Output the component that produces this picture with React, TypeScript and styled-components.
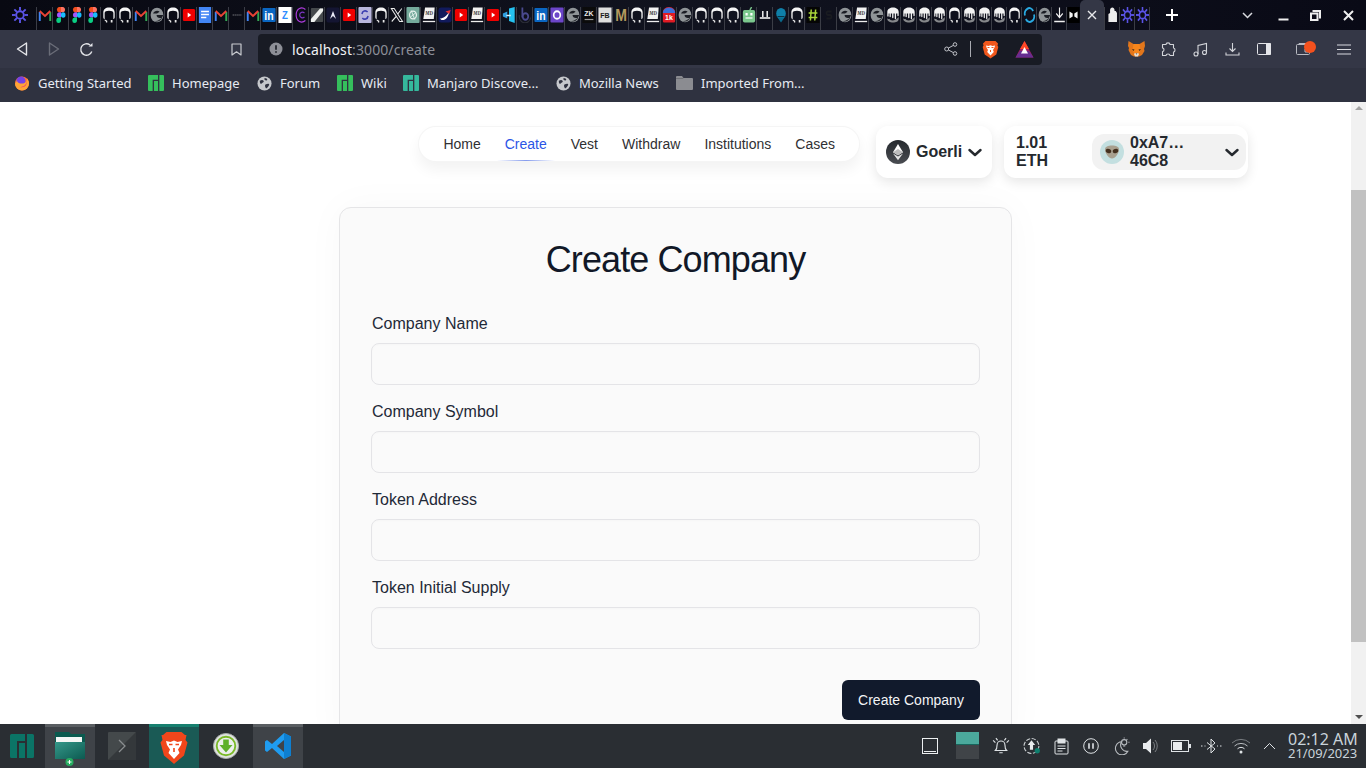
import React from "react";
import styled, { createGlobalStyle } from "styled-components";

const Global = createGlobalStyle`
  html, body { margin: 0; padding: 0; height: 100%; overflow: hidden; background: #fff; }
  * { box-sizing: border-box; }
`;

const Shell = styled.div`
  width: 100vw; height: 100vh; display: flex; flex-direction: column; overflow: hidden;
  font-family: "Liberation Sans", Arial, sans-serif;
`;

/* ---------- Tab strip ---------- */
const TabStrip = styled.div`
  height: 30px; flex: none; display: flex; align-items: stretch;
  background: linear-gradient(90deg, #080912 0%, #11131f 50%, #090a16 100%);
`;
const LeadSlot = styled.div`
  width: 36px; display: flex; align-items: center; justify-content: flex-end; padding: 0 8px 0 0;
`;
const TabSlot = styled.div<{ $w: number }>`
  width: ${p => p.$w}px; flex: none; margin-top: 7px; display: flex; align-items: flex-start; justify-content: center;
  border-left: 1px solid #3b3d46;
  svg { display: block; flex: none; }
`;
const ActiveTab = styled.div`
  width: 24px; flex: none; background: #343746; border-radius: 5px 5px 0 0; display: flex; align-items: center; justify-content: center;
`;
const StripEnd = styled.div`
  flex: 1; display: flex; align-items: flex-start; border-left: 1px solid #3b3d46; height: 23px; margin-top: 7px;
`;
const StripControls = styled.div`
  margin-left: auto; display: flex; align-items: center; height: 16px;
`;
const StripButton = styled.div<{ $w: number }>`
  width: ${p => p.$w}px; display: flex; align-items: center; justify-content: center;
`;
const NewTab = styled.div`
  margin-left: 12px; width: 20px; height: 16px; display: flex; align-items: center; justify-content: center;
`;

/* ---------- Toolbar ---------- */
const Toolbar = styled.div`
  height: 38px; flex: none; background: #343746; display: flex; align-items: center; padding: 0 6px; font-family: "Noto Sans", sans-serif;
`;
const ToolSlot = styled.div<{ $w?: number }>`
  width: ${p => p.$w ?? 32}px; height: 32px; flex: none; display: flex; align-items: center; justify-content: center; position: relative;
`;
const Gap = styled.div<{ $w: number }>` width: ${p => p.$w}px; flex: none; `;
const UrlBar = styled.div`
  width: 784px; height: 31px; flex: none; background: #181b24; border-radius: 4px; display: flex; align-items: center; padding: 0 8px 0 11px; font-size: 14px; color: #f0f2f5;
`;
const UrlText = styled.div` margin-left: 9px; flex: 1; letter-spacing: 0.1px; span { color: #8c8f98; } `;
const Divider = styled.div` width: 1px; height: 16px; background: #a9abb2; margin: 0 11px 0 12px; `;
const Badge = styled.span`
  position: absolute; width: 12px; height: 12px; border-radius: 50%; background: #f4511e; top: 8px; left: 17px;
`;

/* ---------- Bookmarks ---------- */
const BookmarkBar = styled.div`
  height: 34px; flex: none; background: #2f3240; display: flex; align-items: center; padding-left: 14px; padding-bottom: 4px; font-family: "Noto Sans", sans-serif; font-size: 13px; color: #e6eaf2;
`;
const Bookmark = styled.div<{ $w: number }>`
  width: ${p => p.$w}px; flex: none; display: flex; align-items: center; gap: 8px; white-space: nowrap;
`;

/* ---------- Page ---------- */
const Viewport = styled.div` flex: 1; min-height: 0; display: flex; `;
const Page = styled.div` flex: 1; min-width: 0; overflow: hidden; background: #fff; padding-top: 24px; `;
const Header = styled.header` display: flex; justify-content: flex-end; align-items: flex-start; padding-right: 103px; `;
const NavPill = styled.nav`
  height: 36px; display: flex; align-items: center; gap: 24px; padding: 0 24px; margin-right: 16px; border-radius: 18px;
  background: #fff; border: 1px solid rgba(0,0,0,.04); box-shadow: 0 8px 14px rgba(0,0,0,.05); font-size: 14px; color: #27272a;
`;
const NavLink = styled.a<{ $active?: boolean }>`
  position: relative; color: ${p => (p.$active ? "#2b55e6" : "#303033")};
`;
const NavGlow = styled.span`
  position: absolute; left: -8px; right: -8px; top: 24px; height: 1px;
  background: linear-gradient(90deg, rgba(120,145,235,0), rgba(120,145,235,.9), rgba(120,145,235,0));
`;
const WalletCard = styled.div`
  height: 52px; background: #fff; border-radius: 12px; box-shadow: 0 4px 12px rgba(0,0,0,.1); display: flex; align-items: center;
  font-size: 16px; font-weight: 700; color: #25292e;
`;
const NetworkCard = styled(WalletCard)` width: 116px; padding: 0 9px 0 10px; gap: 6px; margin-right: 12px; `;
const AccountCard = styled(WalletCard)` width: 244px; padding: 0 2px 0 12px; justify-content: space-between; line-height: 18px; `;
const Balance = styled.div` width: 50px; `;
const AccountPill = styled.div`
  width: 154px; height: 36px; background: #f2f2f2; border-radius: 12px; display: flex; align-items: center; padding: 0 7px 0 8px;
`;
const AccountName = styled.div` width: 64px; margin-left: 6px; flex: none; `;
const PillChevron = styled.div` margin-left: auto; display: flex; `;

const Card = styled.main`
  width: 673px; margin: 29px 0 0 339px; padding: 31px; background: #fafafa; border: 1px solid #e5e5e7; border-radius: 12px;
  box-shadow: 0 0 40px rgba(0,0,0,.03);
`;
const Title = styled.h1`
  margin: 0 0 31px; padding-top: 1px; font-size: 36px; line-height: 40px; font-weight: 400; text-align: center; color: #111827; letter-spacing: -0.9px;
`;
const Field = styled.div` margin-bottom: 14px; `;
const Label = styled.label` display: block; font-size: 16px; line-height: 24px; padding: 1px 0 0 1px; color: #1f2937; margin-bottom: 7px; height: 25px; `;
const Input = styled.input`
  display: block; width: 100%; height: 42px; background: #fafafa; border: 1px solid #e4e4e7; border-radius: 8px; outline: none;
  box-shadow: inset 0 1px 2px rgba(0,0,0,.02);
`;
const Actions = styled.div` display: flex; justify-content: flex-end; margin-top: 31px; `;
const Submit = styled.button`
  width: 138px; height: 40px; background: #111a2c; color: #f3f4f6; border: 0; border-radius: 6px; font: 14px "Liberation Sans", Arial, sans-serif;
`;

const ScrollTrack = styled.div`
  width: 15px; flex: none; background: #f1f1f1; display: flex; flex-direction: column; align-items: center; position: relative; padding-top: 88px;
`;
const ScrollThumb = styled.div` width: 100%; height: 452px; background: #c1c1c1; `;
const ScrollArrow = styled.div<{ $up?: boolean }>`
  position: absolute; ${p => (p.$up ? "top: 4px;" : "bottom: 5px;")}
  border-left: 4px solid transparent; border-right: 4px solid transparent;
  ${p => (p.$up ? "border-bottom: 4px solid #a3a3a3;" : "border-top: 4px solid #505050;")}
`;

/* ---------- Taskbar ---------- */
const Taskbar = styled.div`
  height: 44px; flex: none; background: #2a2e33; display: flex; align-items: stretch; font-family: "Noto Sans", sans-serif;
`;
const Launcher = styled.div` width: 45px; display: flex; align-items: center; padding-left: 10px; `;
const TaskButton = styled.div<{ $w?: number; $state?: "open" | "active" | "idle"; $mr?: number }>`
  width: ${p => p.$w ?? 50}px; flex: none; margin-right: ${p => p.$mr ?? 0}px; display: flex; align-items: flex-start; justify-content: center;
  background: ${p => (p.$state === "active" ? "#1a5a55" : p.$state === "open" ? "#3f4348" : "transparent")};
  border-top: 3px solid ${p => (p.$state === "active" ? "#17806f" : p.$state === "open" ? "#5a5e62" : "transparent")};
  padding-top: 5px;
`;
const Tray = styled.div` margin-left: auto; display: flex; align-items: center; `;
const TraySlot = styled.div<{ $w: number }>` width: ${p => p.$w}px; flex: none; display: flex; align-items: center; justify-content: center; `;
const Pager = styled.div` width: 23px; height: 27px; margin-bottom: 1px; display: flex; flex-direction: column; `;
const PagerTop = styled.div` height: 13px; background: #4ba99c; border-bottom: 1px solid #17655c; `;
const PagerBottom = styled.div` flex: 1; background: #404448; `;
const Clock = styled.div`
  width: 84px; padding-left: 6px; color: #c9d3da; text-align: left; white-space: nowrap;
`;
const ClockTime = styled.div` font-size: 16px; line-height: 15px; `;
const ClockDate = styled.div` font-size: 13px; line-height: 13px; `;

/* ---------- Icons ---------- */
const tileText = (t: string, fill: string, size = 6, y = 10, weight = 700) => (
  <text x="8" y={y} textAnchor="middle" fontSize={size} fontWeight={weight} fontFamily="Liberation Sans, sans-serif" fill={fill}>{t}</text>
);

const icons: Record<string, React.ReactNode> = {
  spark: (
    <g stroke="#5b54e8" strokeWidth="1.9">
      <circle cx="8" cy="8" r="3.8" />
      {[0, 45, 90, 135, 180, 225, 270, 315].map(a => (
        <line key={a} x1="8" y1="3.600" x2="8" y2="0" transform={`rotate(${a} 8 8)`} />
      ))}
    </g>
  ),
  gmail: (
    <g strokeWidth="2.200" strokeLinejoin="round">
      <path d="M2 14V5" stroke="#4285f4" />
      <path d="M14 14V5" stroke="#34a853" />
      <path d="M2 4l6 5 6-5" stroke="#ea4335" />
    </g>
  ),
  figma: (
    <g>
      <path d="M8 0H5.500a2.700 2.700 0 000 5.300H8z" fill="#f24e1e" />
      <path d="M8 0h2.500a2.700 2.700 0 010 5.300H8z" fill="#ff7262" />
      <path d="M8 5.300H5.500a2.700 2.700 0 000 5.300H8z" fill="#a259ff" />
      <circle cx="10.500" cy="8" r="2.650" fill="#1abcfe" />
      <path d="M8 10.600H5.500A2.700 2.700 0 108 13.300z" fill="#0acf83" />
    </g>
  ),
  github: (
    <g>
      <path d="M1.500 10V5.500C1.500 2.500 4 .5 8 .5s6.500 2 6.500 5V10c0 1.500-.8 2-1.500 2V6c0-1.500-2-2.300-5-2.300S3 4.500 3 6v6c-.8 0-1.500-.5-1.500-2z" fill="#f5f5f5" />
      <path d="M3 12.500c1 .3 2 .5 3 1.200v1.800H4.500v-1L3 13.500z" fill="#e8e8e8" />
      <path d="M10 13h2v2.500h-2z" fill="#e8e8e8" />
    </g>
  ),
  edge: (
    <g>
      <circle cx="8" cy="8" r="7.300" fill="#8f9497" />
      <path d="M3.500 6.500C5 3.500 9 3 11 4.800L8 6.500zM15 8H7.500c0 2.500 3 3.800 6.500 2.500-1 3-5 5-8.500 3.500 4 0 8-2 9.500-6z" fill="#1b1d24" />
    </g>
  ),
  yt: (
    <g>
      <rect x="1" y="2" width="14" height="12" rx="1.500" fill="#ef0000" />
      <path d="M6.500 5.500l4 2.500-4 2.500z" fill="#fff" />
    </g>
  ),
  docs: (
    <g>
      <rect x="1" y="0" width="14" height="16" fill="#4285f4" />
      <path d="M3.500 4.500h9M3.500 7.500h9M3.500 10.500h6" stroke="#fff" strokeWidth="1.300" />
    </g>
  ),
  dash: <path d="M3 8h10" stroke="#55575e" strokeWidth="1.500" strokeDasharray="1.500 .7" />,
  linkedin: (
    <g>
      <rect x="0.500" y="1" width="15" height="14" rx="1" fill="#0a66c2" />
      {tileText("in", "#fff", 12, 13)}
    </g>
  ),
  z: (
    <g>
      <rect x="0.500" y="0" width="15" height="16" fill="#fff" />
      {tileText("Z", "#2d8cff", 11, 12)}
    </g>
  ),
  c: (
    <g stroke="#b13de0" strokeWidth="1.300">
      <path d="M13 2.500C9 -.5 2.500 1 2.500 8s6.500 8.500 10.500 5.500" />
      <path d="M12 6C10 4.500 6.500 5 6.500 8s3.500 3.500 5.500 2" stroke="#7f35c9" />
    </g>
  ),
  pen: (
    <g>
      <rect x="1" y="1" width="14" height="14" rx="1" fill="#45494c" />
      <path d="M1 15v-3L11.500 1.500H15v2.500L5 15z" fill="#eef0ee" />
    </g>
  ),
  a: (
    <g>
      <rect x="0.500" y="0.500" width="15" height="15" rx="2" fill="#141532" />
      <path d="M4.500 12L8 4l3.500 8-3.500-3z" fill="#e9e9f5" />
    </g>
  ),
  sync: (
    <g>
      <rect x="0.500" y="0" width="15" height="16" rx="1" fill="#b9b7de" />
      <path d="M11 5A3.800 3.800 0 004.500 7M5 11a3.800 3.800 0 006.500-2" stroke="#3b3fb0" strokeWidth="1.800" />
    </g>
  ),
  x: <path d="M1.500 1.500h3.300l9.500 13H11zM13.500 1.500L9 6.800M7 9.500l-5 5" stroke="#efefef" strokeWidth="1.100" />,
  gpt: (
    <g>
      <rect x="0.500" y="0" width="15" height="16" rx="1" fill="#74aa9c" />
      <circle cx="8" cy="8" r="3.900" stroke="#e8f3ef" strokeWidth="1.400" />
      <path d="M6 3.500l4 9M11.500 5.500l-7 5" stroke="#e8f3ef" strokeWidth=".9" />
    </g>
  ),
  md: (
    <g>
      <path d="M3.500 0.500H14.500L13.500 12H1.500z" fill="#f2f2f2" />
      <path d="M1 14.500h14" stroke="#eee" strokeWidth="1.300" />
      <text x="8" y="8" textAnchor="middle" fontSize="5.500" fontStyle="italic" fontWeight="700" fontFamily="Liberation Serif, serif" fill="#333">MD</text>
    </g>
  ),
  navy: (
    <g>
      <rect x="0.500" y="0.500" width="15" height="15" rx="3" fill="#111a5c" />
      <path d="M2 11.500c4 0 8-2 11-7.500-1 6-4 9.500-9 9z" fill="#fff" />
      <path d="M8.500 4.500l6-1.500-1.500 4z" fill="#e23030" />
    </g>
  ),
  azure: (
    <g>
      <path d="M1 6.500L6 4.500v7l-5-2z" fill="#2f9fe0" />
      <path d="M8 1.500l6.500-1.500v16L8 14z" fill="#25c2f0" />
      <path d="M5 8.500h5" stroke="#d9f3ff" strokeWidth="1.500" />
    </g>
  ),
  boot: (
    <g>
      <path d="M5 0.500v10" stroke="#4a4a8e" strokeWidth="2" />
      <circle cx="8.500" cy="9.500" r="3.200" stroke="#4a4a8e" strokeWidth="2" />
      <path d="M1.500 8a6.500 6.500 0 0013 2.500" stroke="#2c2e38" strokeWidth="1.200" />
    </g>
  ),
  gear: (
    <g>
      <rect x="0.500" y="0.500" width="15" height="15" rx="1" fill="#6c45c9" />
      <circle cx="8" cy="8" r="3.800" stroke="#fff" strokeWidth="1.900" />
    </g>
  ),
  zk: (
    <g>
      <rect x="0.500" y="0" width="15" height="16" fill="#0b0b0b" />
      {tileText("ZK", "#e9e9e9", 8, 9)}
      <path d="M3 12.500h10" stroke="#999" strokeWidth="1.200" />
    </g>
  ),
  fb: (
    <g>
      <rect x="0.500" y="0.500" width="15" height="15" fill="#dedede" />
      {tileText("FB", "#1a1a1a", 8, 11)}
    </g>
  ),
  gold: tileText("M", "#b49a5e", 16, 14),
  red: (
    <g>
      <path d="M1 5a7 5 0 0114 0v9a1.500 1.500 0 01-1.500 1.500h-11A1.500 1.500 0 011 14z" fill="#e01b24" />
      <path d="M1 6a7 5.500 0 0114 0z" fill="#3d6fd8" />
      {tileText("1k", "#fff", 8, 13.500)}
    </g>
  ),
  robot: (
    <g>
      <rect x="1" y="3" width="14" height="12.500" rx="2" fill="#7bc88d" />
      <path d="M9 3l2-3" stroke="#7bc88d" strokeWidth="1.500" />
      <rect x="4" y="6" width="2.500" height="2.500" fill="#fff" />
      <rect x="9.500" y="6" width="2.500" height="2.500" fill="#fff" />
      <path d="M4 11h8" stroke="#fff" strokeWidth="1.200" />
    </g>
  ),
  u: <path d="M5.500 4v6M10.500 4v6M2 11h12" stroke="#fff" strokeWidth="1.600" />,
  balloon: (
    <g>
      <circle cx="8" cy="6.500" r="5.500" fill="#0f7fa8" />
      <path d="M4 10.500L8 15.500l4-5z" fill="#0a6a8c" />
      <path d="M4 9.500h8" stroke="#0a2d3c" />
    </g>
  ),
  hash: (
    <g>
      <rect x="0.500" y="0" width="15" height="16" fill="#050505" />
      <path d="M6 2.500l-1 11M11 2.500l-1 11M3 6h10M3 10.500h10" stroke="#a8d53a" strokeWidth="1.700" />
    </g>
  ),
  s: <path d="M11 4.500H6.500a1.800 1.800 0 000 3.500h3a1.800 1.800 0 010 3.500H5" stroke="#191b20" strokeWidth="2" />,
  drip: (
    <g>
      <path d="M1.500 5C1.500 2 4.500 .5 8 .5s6.500 1.500 6.500 4.500v3.500c0 1-1.500 1-1.500 0V6.500h-1.500v5c0 1-1.500 1-1.500 0v-5H8.500v4c0 1-1.500 1-1.500 0v-4H5.500v3c0 1-1.500 1-1.500 0v-3H3V9c0 1-1.500 1-1.500 0z" fill="#f2f2f2" />
      <path d="M1.500 10.500c0 1 .5 1.500 1.500 1.500s2 .5 2 1c3 1 6.500 0 9.500-3V12c0 2.500-3 3.500-6.500 3.500S1.500 14 1.500 12z" fill="#85878a" />
    </g>
  ),
  blue: (
    <g stroke="#29a9e1" strokeWidth="2.200">
      <path d="M2.500 8.500A5.500 5.500 0 0112.500 4" />
      <path d="M13.500 7.500A5.500 5.500 0 013.500 12" />
    </g>
  ),
  dl: <path d="M8 0.500v10M4 6.500l4 4 4-4M1.500 14.500h13" stroke="#f0f0f0" strokeWidth="1.400" />,
  bow: (
    <g>
      <rect x="0.500" y="0" width="15" height="16" fill="#000" />
      <path d="M3 4.500l4 2v3l-4 2zM13 4.500v7l-4-2v-3z" fill="#f2f2f2" />
    </g>
  ),
  puzzle: <path d="M3 15V7l2-1V3c0-3.500 5.500-3.500 5.500 0v1H12l1.500 2v9z" fill="#ececec" />,
};

const stripA = "gmail figma figma figma github github gmail edge github yt docs gmail dash gmail linkedin z c pen a yt sync github x gpt md navy yt md yt azure boot linkedin gear edge zk fb gold github md red edge github github github robot u balloon github hash s edge md edge drip drip".split(" ");
const stripB = "drip drip github drip drip drip github blue edge dl bow".split(" ");
const stripC = ["puzzle", "spark", "spark"];

const Fav = ({ k, w = 14 }: { k: string; w?: number }) => (
  <svg width={w} height={16} viewBox="0 0 16 16" preserveAspectRatio="none" fill="none">{icons[k]}</svg>
);

const ManjaroLogo = ({ size, color }: { size: number; color: string }) => (
  <svg width={size} height={size} viewBox="0 0 24 24">
    <path d="M0 1.500A1.500 1.500 0 011.500 0H15v7H7v17H1.500A1.500 1.500 0 010 22.500zM9 9h6v15H9zM17 0h5.500A1.500 1.500 0 0124 1.500v21a1.500 1.500 0 01-1.500 1.500H17z" fill={color} />
  </svg>
);

const Globe = () => (
  <svg width="15" height="15" viewBox="0 0 16 16">
    <circle cx="8" cy="8" r="7.500" fill="#c6c8cc" />
    <path d="M3 5c2-1 3-1 4 0s-1 2-2 3-2 0-2-3zM9 9c2-1 4-1 4 0s-2 4-3 4-2-3-1-4zM8 2c2 0 3 1 3 2s-2 1-3 0z" fill="#2f3240" />
  </svg>
);

const Chevron = ({ w = 14 }: { w?: number }) => (
  <svg width={w} height="9" viewBox="0 0 14 9" fill="none">
    <path d="M1.500 2L7 7l5.500-5" stroke="#25292e" strokeWidth="2.400" strokeLinecap="round" strokeLinejoin="round" />
  </svg>
);

const stroke = "#d3d5da";

export default function App() {
  return (
    <Shell>
      <Global />
      <TabStrip>
        <LeadSlot><Fav k="spark" w={16} /></LeadSlot>
        {stripA.map((k, i) => <TabSlot key={i} $w={16}><Fav k={k} /></TabSlot>)}
        {stripB.map((k, i) => <TabSlot key={i} $w={i === 10 ? 14 : 15}><Fav k={k} w={13} /></TabSlot>)}
        <ActiveTab>
          <svg width="10" height="10" viewBox="0 0 10 10"><path d="M1 1l8 8M9 1l-8 8" stroke="#e8e9ec" strokeWidth="1.400" /></svg>
        </ActiveTab>
        {stripC.map((k, i) => <TabSlot key={i} $w={15}><Fav k={k} w={13} /></TabSlot>)}
        <StripEnd>
          <NewTab>
            <svg width="12" height="12" viewBox="0 0 12 12"><path d="M6 0v12M0 6h12" stroke="#fff" strokeWidth="2" /></svg>
          </NewTab>
          <StripControls>
            <StripButton $w={38}>
              <svg width="11" height="7" viewBox="0 0 11 7" fill="none"><path d="M1 1l4.500 4.500L10 1" stroke="#d8dadf" strokeWidth="1.500" /></svg>
            </StripButton>
            <StripButton $w={34}>
              <svg width="11" height="11" viewBox="0 0 11 11"><path d="M0.500 9.500h10" stroke="#eee" strokeWidth="2" /></svg>
            </StripButton>
            <StripButton $w={30}>
              <svg width="11" height="11" viewBox="0 0 11 11" fill="none"><rect x="1" y="3.500" width="6.500" height="6.500" stroke="#eee" strokeWidth="2" /><path d="M3.500 2V1H10v6.500H9" stroke="#eee" strokeWidth="2" /></svg>
            </StripButton>
            <StripButton $w={36}>
              <svg width="11" height="11" viewBox="0 0 11 11"><path d="M1 1l9 9M10 1l-9 9" stroke="#eee" strokeWidth="2" /></svg>
            </StripButton>
          </StripControls>
        </StripEnd>
      </TabStrip>

      <Toolbar>
        <ToolSlot>
          <svg width="12" height="14" viewBox="0 0 12 14" fill="none"><path d="M10.500 1L1.500 7l9 6z" stroke="#e4e5e9" strokeWidth="1.400" strokeLinejoin="round" /></svg>
        </ToolSlot>
        <ToolSlot>
          <svg width="12" height="14" viewBox="0 0 12 14" fill="none"><path d="M1.500 1l9 6-9 6z" stroke="#6a6d78" strokeWidth="1.400" strokeLinejoin="round" /></svg>
        </ToolSlot>
        <ToolSlot>
          <svg width="15" height="15" viewBox="0 0 15 15" fill="none"><path d="M12.800 9.500A5.700 5.700 0 1111 3" stroke="#e4e5e9" strokeWidth="1.400" /><path d="M9.500 4.500h4v-3.500z" fill="#e4e5e9" /></svg>
        </ToolSlot>
        <Gap $w={118} />
        <ToolSlot $w={32}>
          <svg width="11" height="13" viewBox="0 0 11 13" fill="none"><path d="M1 1h9v11L5.500 8.800 1 12z" stroke="#c9cbd0" strokeWidth="1.200" strokeLinejoin="round" /></svg>
        </ToolSlot>
        <Gap $w={6} />
        <UrlBar>
          <svg width="14" height="14" viewBox="0 0 14 14"><circle cx="7" cy="7" r="6.500" fill="#8d8f97" /><path d="M7 3.200v4.500M7 9.300v1.500" stroke="#181b24" strokeWidth="1.600" /></svg>
          <UrlText>localhost<span>:3000/create</span></UrlText>
          <svg width="14" height="14" viewBox="0 0 14 14" fill="none" stroke="#bfc1c7" strokeWidth="1"><circle cx="2.700" cy="7" r="2" /><circle cx="11" cy="2.500" r="1.800" /><circle cx="11" cy="11.500" r="1.800" /><path d="M4.500 6l5-2.700M4.500 8l5 2.700" /></svg>
          <Divider />
          <svg width="17" height="19" viewBox="0 0 17 19">
            <path d="M3.500 1h10L16 3.500l-.5 2 .8 1.500-2 7.500L9.500 17.800 8.500 18.500l-1-.7-4.800-3.300L.7 7l.8-1.500-.5-2z" fill="#f1581d" />
            <path d="M4 5.500l2.500.5 2-.7 2 .7L13 5.500l-.5 2-1.500 2.500.8 2L8.500 15.500 5.200 12l.8-2L4.500 7.500z" fill="#fff" />
            <path d="M5.500 7.500h2M9.500 7.500h2M8.500 10v2" stroke="#f1581d" strokeWidth="1" />
          </svg>
          <Gap $w={16} />
          <svg width="19" height="17" viewBox="0 0 19 17">
            <path d="M9.500 0L18.500 16.500H.5z" fill="#9e1f63" />
            <path d="M9.500 0L14 8H5z" fill="#ff4724" />
            <path d="M.5 16.500L5 10h9l4.500 6.500z" fill="#662d91" />
            <path d="M9.500 6L13 12.500H6z" fill="#fff" />
          </svg>
        </UrlBar>
        <Gap $w={78} />
        <ToolSlot>
          <svg width="17" height="16" viewBox="0 0 17 16">
            <path d="M0.500 0l5 3h6l5-3 .5 5-1 3 .5 2-2.500 4-3 1.500h-5L3 14 .5 9l.5-2-1-2z" fill="#e2761b" />
            <path d="M5.500 3h6L12.500 9l-2 4h-4l-2-4z" fill="#f6851b" />
            <path d="M4 8l2.500.5L5.500 10zM13 8l-2.500.5 1 1.500z" fill="#3a2a1c" />
            <path d="M6 13l1-1h3l1 1-1 2.500H7z" fill="#e8ddcf" />
            <path d="M7.500 12.500h2l-1 1z" fill="#2a1c10" />
          </svg>
        </ToolSlot>
        <ToolSlot>
          <svg width="15" height="15" viewBox="0 0 15 15" fill="none"><path d="M5 2.500c0-2.200 4-2.200 4 0h3.500v3.500c2 0 2 4 0 4V13.500H9c0-2-4-2-4 0H1.500v-4c2 0 2-3.500 0-3.500V2.500z" stroke={stroke} strokeWidth="1.100" strokeLinejoin="round" /></svg>
        </ToolSlot>
        <ToolSlot>
          <svg width="15" height="15" viewBox="0 0 15 15" fill="none" stroke={stroke} strokeWidth="1.100"><circle cx="3" cy="12" r="2" /><circle cx="11.500" cy="10.500" r="2" /><path d="M5 12V3.500L13.500 1.500v9" /></svg>
        </ToolSlot>
        <ToolSlot>
          <svg width="15" height="15" viewBox="0 0 15 15" fill="none" stroke={stroke} strokeWidth="1.100"><path d="M7.500 1v8M4.500 6.500l3 3 3-3M1 10.500v2.500h13v-2.500" /></svg>
        </ToolSlot>
        <ToolSlot>
          <svg width="14" height="12" viewBox="0 0 14 12"><rect x=".5" y=".5" width="13" height="11" rx="1" fill="#343746" stroke="#e4e5e9" /><rect x="9" y="0" width="5" height="12" rx="1" fill="#e4e5e9" /></svg>
        </ToolSlot>
        <Gap $w={7} />
        <ToolSlot>
          <svg width="14" height="12" viewBox="0 0 14 12" fill="none" stroke="#b9bbc2" strokeWidth="1"><rect x=".5" y="1.500" width="13" height="10" rx="1" /><path d="M3 1.500V.5h8v1M9 6h5v3H9z" /></svg>
          <Badge />
        </ToolSlot>
        <Gap $w={9} />
        <ToolSlot>
          <svg width="14" height="11" viewBox="0 0 14 11"><path d="M0 1h14M0 5.500h14M0 10h14" stroke="#d8dadf" strokeWidth="1.200" /></svg>
        </ToolSlot>
      </Toolbar>

      <BookmarkBar>
        <Bookmark $w={134}>
          <svg width="16" height="16" viewBox="0 0 16 16">
            <circle cx="8" cy="8.500" r="7" fill="#ff7139" />
            <circle cx="7" cy="6" r="4.500" fill="#7542e5" />
            <path d="M1 8.500a7 7 0 0014 0c0-2-1-4-2-5 0 3-2 5-5 5S4 8 3 6z" fill="#ffa436" />
            <path d="M4 11c3 2 8 1 9-5 0 5-4 8-9 5z" fill="#e31587" />
          </svg>
          <span>Getting Started</span>
        </Bookmark>
        <Bookmark $w={109}>
          <ManjaroLogo size={16} color="#35bf5c" />
          <span>Homepage</span>
        </Bookmark>
        <Bookmark $w={80}><Globe /><span>Forum</span></Bookmark>
        <Bookmark $w={66}>
          <ManjaroLogo size={16} color="#35bf5c" />
          <span>Wiki</span>
        </Bookmark>
        <Bookmark $w={153}>
          <ManjaroLogo size={16} color="#35b89c" />
          <span>Manjaro Discove...</span>
        </Bookmark>
        <Bookmark $w={120}><Globe /><span>Mozilla News</span></Bookmark>
        <Bookmark $w={135}>
          <svg width="17" height="16" viewBox="0 0 17 16"><path d="M0 2a1 1 0 011-1h5l1.500 2H16a1 1 0 011 1v10a1 1 0 01-1 1H1a1 1 0 01-1-1z" fill="#8b8c91" /><path d="M0 4h7.500L7 3H0z" fill="#6f7075" /></svg>
          <span>Imported From...</span>
        </Bookmark>
      </BookmarkBar>

      <Viewport>
        <Page>
          <Header>
            <NavPill>
              <NavLink>Home</NavLink>
              <NavLink $active>Create<NavGlow /></NavLink>
              <NavLink>Vest</NavLink>
              <NavLink>Withdraw</NavLink>
              <NavLink>Institutions</NavLink>
              <NavLink>Cases</NavLink>
            </NavPill>
            <NetworkCard>
              <svg width="24" height="24" viewBox="0 0 24 24">
                <defs><linearGradient id="eth" x1="0" y1="0" x2="0" y2="1"><stop offset="0" stopColor="#25292e" /><stop offset="1" stopColor="#4a4d52" /></linearGradient></defs>
                <circle cx="12" cy="12" r="12" fill="url(#eth)" />
                <path d="M12 4l-5 8.200 5 3 5-3z" fill="#fff" />
                <path d="M7 13.400l5 3 5-3-5 6.800z" fill="#e4e4e4" />
                <path d="M12 9l5 3.200-5 3-5-3z" fill="#bcbcbc" />
              </svg>
              <span>Goerli</span>
              <Chevron />
            </NetworkCard>
            <AccountCard>
              <Balance>1.01 ETH</Balance>
              <AccountPill>
                <svg width="24" height="24" viewBox="0 0 24 24">
                  <circle cx="12" cy="12" r="12" fill="#c3dfe0" />
                  <path d="M5 9.500C5 6.500 8 5.500 12 5.500s7 1 7 4c0 4-4 9-7 9s-7-5-7-9z" fill="#a8a08f" />
                  <ellipse cx="8.500" cy="11" rx="2.800" ry="2.100" fill="#43301f" transform="rotate(20 8.500 11)" />
                  <ellipse cx="15.500" cy="11" rx="2.800" ry="2.100" fill="#43301f" transform="rotate(-20 15.500 11)" />
                </svg>
                <AccountName>0xA7… 46C8</AccountName>
                <PillChevron><Chevron /></PillChevron>
              </AccountPill>
            </AccountCard>
          </Header>
          <Card>
            <Title>Create Company</Title>
            {["Company Name", "Company Symbol", "Token Address", "Token Initial Supply"].map(l => (
              <Field key={l}>
                <Label>{l}</Label>
                <Input />
              </Field>
            ))}
            <Actions>
              <Submit>Create Company</Submit>
            </Actions>
          </Card>
        </Page>
        <ScrollTrack>
          <ScrollArrow $up />
          <ScrollThumb />
          <ScrollArrow />
        </ScrollTrack>
      </Viewport>

      <Taskbar>
        <Launcher>
          <ManjaroLogo size={24} color="#0b7466" />
        </Launcher>
        <TaskButton $state="open" $mr={12}>
          <svg width="30" height="34" viewBox="0 0 30 34">
            <defs><linearGradient id="fold" x1="0" y1="0" x2="1" y2="1"><stop offset="0" stopColor="#35988a" /><stop offset="1" stopColor="#0c5a50" /></linearGradient></defs>
            <path d="M0 0h14l2 2h14v8H0z" fill="#0b5a4f" />
            <rect x="1" y="5" width="26" height="5" fill="#f4f6f5" />
            <path d="M0 10h30v17H0z" fill="url(#fold)" />
            <circle cx="14.500" cy="30" r="4" fill="#27ae60" />
            <path d="M14.500 28v4M12.500 30h4" stroke="#fff" strokeWidth="1" />
          </svg>
        </TaskButton>
        <TaskButton $w={30} $mr={12}>
          <svg width="28" height="28" viewBox="0 0 28 28">
            <rect width="28" height="28" rx="1" fill="#44494b" />
            <path d="M0 28L28 0v28z" fill="#34383b" />
            <path d="M11 8l6 6-6 6" fill="none" stroke="#8a8e90" strokeWidth="1.300" />
          </svg>
        </TaskButton>
        <TaskButton $state="active" $mr={14}>
          <svg width="28" height="33" viewBox="0 0 28 33">
            <path d="M6.500 0h15L25 3l1.500 0L25.500 8l2 2.500-3.500 13L15 31l-1 1-1-1-9-7.500L.500 10.500l2-2.500L1.500 3H3z" fill="#f1461b" />
            <path d="M6 9l4.500 1 3.500-1.500L17.500 10 22 9l-1 4-3 4.500 1.500 3.500L14 27l-5.500-6L10 17.500 7 13z" fill="#fff" />
            <path d="M9 12.500h3.500M15.500 12.500H19M14 16v4" stroke="#f1461b" strokeWidth="1.600" />
          </svg>
        </TaskButton>
        <TaskButton $w={26} $mr={14}>
          <svg width="28" height="28" viewBox="0 0 28 28">
            <circle cx="14" cy="14" r="13.500" fill="#dfe3e0" stroke="#a8aca9" />
            <circle cx="14" cy="14" r="10" fill="#ecefec" stroke="#7ab928" strokeWidth="2" />
            <path d="M11 7h6v6h4l-7 8-7-8h4z" fill="#5eb02b" />
          </svg>
        </TaskButton>
        <TaskButton $state="open">
          <svg width="28" height="28" viewBox="0 0 28 28">
            <path d="M20 1l7 3.500v19L20 27 8 16 3 20l-2-1.500V9.500L3 8l5 4z" fill="#1f9cf0" />
            <path d="M20 8l-7 6 7 6z" fill="#3f4348" />
            <path d="M20 1l7 3.500v19L20 27z" fill="#0e7fd0" />
          </svg>
        </TaskButton>
        <Tray>
          <TraySlot $w={40}>
            <svg width="16" height="16" viewBox="0 0 16 16" fill="none" stroke="#eceff1"><rect x=".5" y=".5" width="15" height="15" /><path d="M2 13.500h12" /></svg>
          </TraySlot>
          <TraySlot $w={35}><Pager><PagerTop /><PagerBottom /></Pager></TraySlot>
          <TraySlot $w={32}>
            <svg width="18" height="18" viewBox="0 0 16 16" fill="none" stroke="#dfe3e6"><path d="M3 12c1-1 1.500-3 1.500-5a3.500 3.500 0 017 0c0 2 .5 4 1.500 5zM6.500 14h3M1 3l2 2M15 3l-2 2M3.500 1l1.500 2M12.500 1L11 3" /></svg>
          </TraySlot>
          <TraySlot $w={29}>
            <svg width="18" height="18" viewBox="0 0 17 17" fill="none">
              <circle cx="8" cy="8.500" r="7" stroke="#cfd3d6" strokeDasharray="4 1.500" />
              <path d="M8 3l3.500 4.500H9.500V12h-3V7.500H4.500z" fill="#e9ecee" />
              <circle cx="13.500" cy="13" r="2.500" fill="#0f7e6d" />
            </svg>
          </TraySlot>
          <TraySlot $w={30}>
            <svg width="15" height="17" viewBox="0 0 15 16" fill="none" stroke="#dfe3e6"><rect x="1" y="2.500" width="13" height="13" rx="1" /><rect x="4" y=".5" width="7" height="4" fill="#dfe3e6" /><path d="M3.500 7.500h8M3.500 10h8M3.500 12.500h5" /></svg>
          </TraySlot>
          <TraySlot $w={30}>
            <svg width="16" height="16" viewBox="0 0 16 16" fill="none"><circle cx="8" cy="8" r="7.300" stroke="#dfe3e6" /><path d="M6 5.200v5.600M10 5.200v5.600" stroke="#dfe3e6" strokeWidth="1.600" /></svg>
          </TraySlot>
          <TraySlot $w={30}>
            <svg width="18" height="18" viewBox="0 0 17 17" fill="none" stroke="#b8bcc0"><path d="M9 4.500a6.200 6.200 0 106 9 6 6 0 01-6-9z" /><circle cx="11.500" cy="5" r="2.500" /><path d="M11.500.5v1M15.500 5h1M14.500 2l-.7.7M10.500 8.500h2" /></svg>
          </TraySlot>
          <TraySlot $w={29}>
            <svg width="17" height="16" viewBox="0 0 17 16" fill="none"><path d="M1 5h3l5-4.500v15L4 11H1z" fill="#e9ecee" /><path d="M11 4a6 6 0 010 8M13 2a9 9 0 010 12" stroke="#7a7e82" /></svg>
          </TraySlot>
          <TraySlot $w={31}>
            <svg width="20" height="12" viewBox="0 0 20 12" fill="none"><rect x=".5" y=".5" width="17" height="11" stroke="#dfe3e6" /><rect x="2" y="2" width="9" height="8" fill="#e9ecee" /><rect x="18" y="4" width="2" height="4" fill="#dfe3e6" /></svg>
          </TraySlot>
          <TraySlot $w={30}>
            <svg width="22" height="16" viewBox="0 0 22 16" fill="none" stroke="#dfe3e6"><path d="M7 4.500l8 6.500-4 4V1l4 4-8 6.500" /><path d="M1 8h2M4.500 8h1M17 8h1M20 8h2" strokeDasharray="1.500" /></svg>
          </TraySlot>
          <TraySlot $w={30}>
            <svg width="22" height="16" viewBox="0 0 20 16" fill="none"><path d="M1 5a13 13 0 0118 0" stroke="#787c80" /><path d="M3.500 8a9.500 9.500 0 0113 0" stroke="#b8bcc0" /><path d="M6.500 10.800a5 5 0 017 0" stroke="#dfe3e6" /><circle cx="10" cy="14" r="1.500" fill="#dfe3e6" /></svg>
          </TraySlot>
          <TraySlot $w={26}>
            <svg width="13" height="8" viewBox="0 0 13 8" fill="none"><path d="M1 7l5.500-5.500L12 7" stroke="#dfe3e6" /></svg>
          </TraySlot>
          <Clock>
            <ClockTime>02:12 AM</ClockTime>
            <ClockDate>21/09/2023</ClockDate>
          </Clock>
        </Tray>
      </Taskbar>
    </Shell>
  );
}
